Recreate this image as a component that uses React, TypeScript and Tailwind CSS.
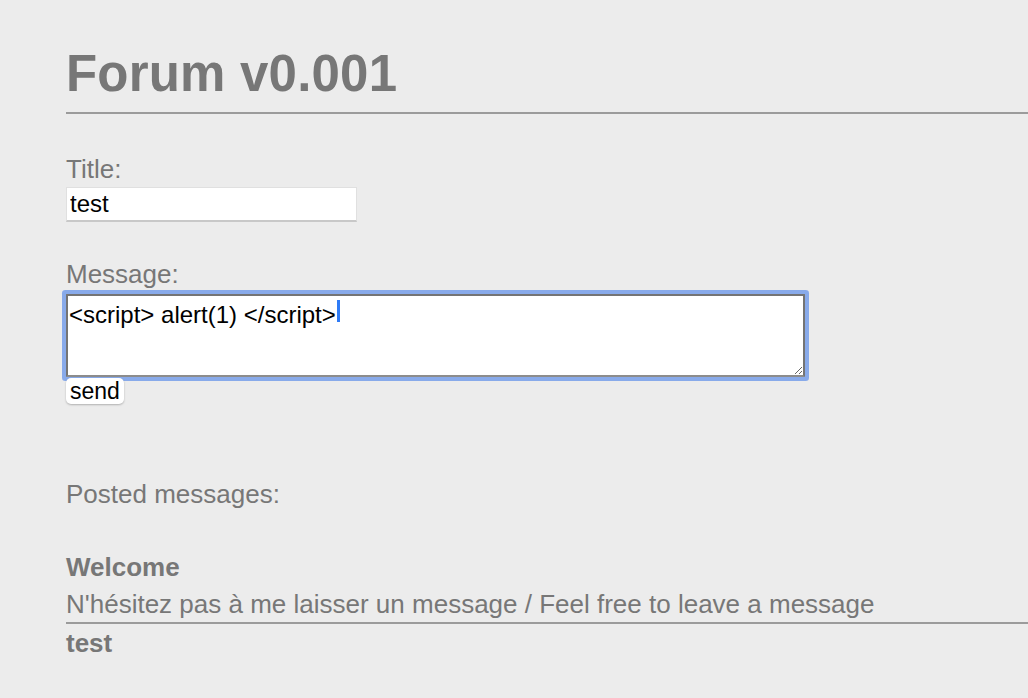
import React from "react";

const messages = [
  { title: "Welcome", body: "N'hésitez pas à me laisser un message / Feel free to leave a message" },
  { title: "test", body: "" },
];

export default function App() {
  return (
    <div
      className="min-h-screen bg-[#ececec] pt-[48px] pl-[66px] text-[#777777]"
      style={{ fontFamily: '"Liberation Sans", Arial, Helvetica, sans-serif' }}
    >
      <h1 className="text-[51px] font-bold leading-none tracking-[0.2px]">Forum v0.001</h1>
      <div className="mt-[13px] h-[2px] bg-[#9b9b9b]" />

      <form onSubmit={(e) => e.preventDefault()}>
        <div className="mt-[40px] text-[26px] leading-[30px]">Title:</div>
        <input
          defaultValue="test"
          className="mt-[3px] block h-[35px] w-[291px] border border-[#e0e0e0] border-b-2 border-b-[#c8c8c8] bg-white px-[3px] text-[24px] text-black outline-none"
        />

        <div className="mt-[37px] text-[26px] leading-[30px]">Message:</div>
        <div className="relative mt-[5px] w-[739px]">
          <textarea
            defaultValue="<script> alert(1) </script>"
            className="block h-[83px] w-[739px] rounded-[1px] border-2 border-[#747474] border-b-[#8c8c8c] bg-white p-px text-[24px] text-black shadow-[0_0_0_4px_#88aaea] outline-none"
          />
          <span className="absolute left-[271px] top-[6px] h-[22px] w-[3px] bg-[#2f7bf6]" />
        </div>
        <button
          type="submit"
          className="relative mt-px block h-[26px] rounded-[5px] bg-white px-[4px] text-[23px] leading-[26px] text-black shadow-[0_1px_2px_rgba(0,0,0,0.25)]"
        >
          send
        </button>
      </form>

      <div className="mt-[75px] text-[26px] leading-[30px]">Posted messages:</div>

      <div className="mt-[43px]">
        {messages.map((m, i) => (
          <div key={i}>
            {i > 0 && <div className="mt-[3px] h-[2px] bg-[#9b9b9b]" />}
            <div className={`${i > 0 ? "mt-[4px]" : ""} text-[26px] font-bold leading-[30px]`}>{m.title}</div>
            {m.body && <div className="mt-[7px] text-[26px] leading-[30px]">{m.body}</div>}
          </div>
        ))}
      </div>
    </div>
  );
}
